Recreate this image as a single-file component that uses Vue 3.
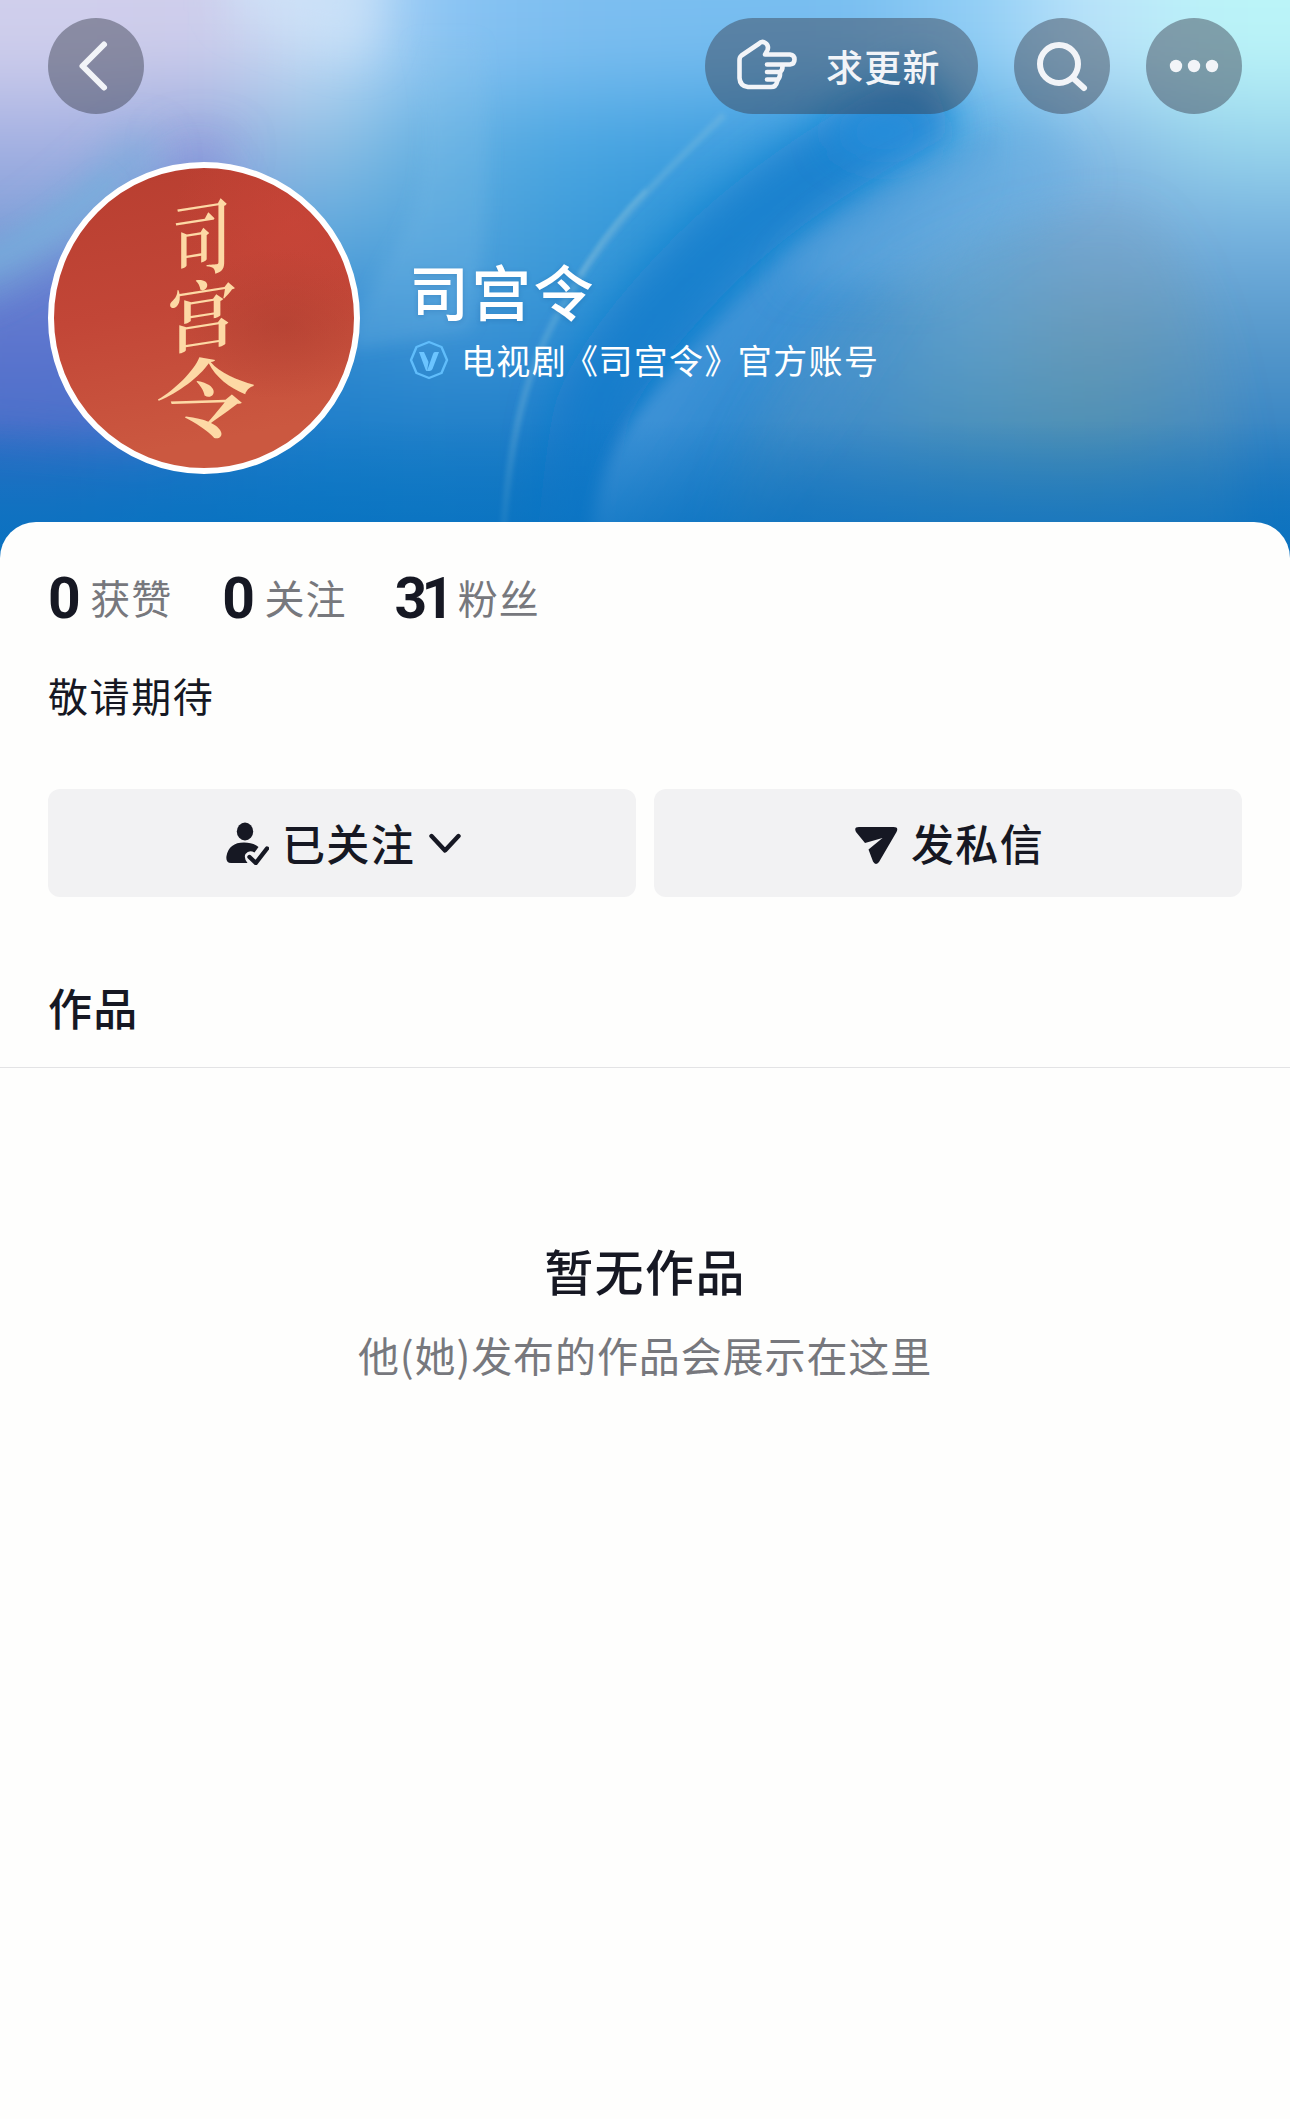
<template>
  <main class="profile-page">
    <section class="hero">
      <svg class="hero-bg" viewBox="0 0 1290 570" preserveAspectRatio="none" aria-hidden="true">
        <defs>
          <linearGradient id="wing" gradientUnits="userSpaceOnUse" x1="680" y1="300" x2="860" y2="420">
            <stop offset="0" stop-color="#4596da" />
            <stop offset="1" stop-color="#4b98d3" stop-opacity="0" />
          </linearGradient>
          <linearGradient id="floor" x1="0" y1="0" x2="0" y2="1">
            <stop offset="0" stop-color="#0872c1" stop-opacity="0" />
            <stop offset="1" stop-color="#0872c1" stop-opacity=".85" />
          </linearGradient>
          <filter id="b2" filterUnits="userSpaceOnUse" x="-200" y="-200" width="1700" height="1000"><feGaussianBlur stdDeviation="2" /></filter>
          <filter id="b8" filterUnits="userSpaceOnUse" x="-200" y="-200" width="1700" height="1000"><feGaussianBlur stdDeviation="8" /></filter>
          <filter id="b20" filterUnits="userSpaceOnUse" x="-200" y="-200" width="1700" height="1000"><feGaussianBlur stdDeviation="20" /></filter>
          <filter id="mesh" filterUnits="userSpaceOnUse" x="-200" y="-200" width="1700" height="1000" color-interpolation-filters="sRGB"><feGaussianBlur stdDeviation="50 44" /></filter>
        </defs>
        <g filter="url(#mesh)">
          <rect v-for="cell in cells" :key="cell.key" :x="cell.x" :y="cell.y" :width="cell.w" :height="cell.h" :fill="cell.fill" />
        </g>
        <path d="M230-60H376Q390 20 362 60Q300 40 230 10Z" fill="#d2e6fa" fill-opacity=".55" filter="url(#b20)" />
        <path d="M-40 310Q80 265 200 150L230 190L160 450L-40 430Z" fill="#5f74d0" fill-opacity=".5" filter="url(#b20)" />
        <ellipse cx="200" cy="150" rx="36" ry="16" fill="#9296dc" fill-opacity=".6" filter="url(#b20)" />
        <path d="M-40 285Q60 235 150 145" fill="none" stroke="#74acdb" stroke-opacity=".75" stroke-width="36" filter="url(#b20)" />
        <path d="M-40 272Q40 240 110 180" fill="none" stroke="#78b0dc" stroke-opacity=".4" stroke-width="26" filter="url(#b8)" />
        <path d="M412 40Q444 160 398 240T350 350L470 330Q500 180 480 40Z" fill="#8cc4ea" fill-opacity=".2" filter="url(#b8)" />
        <path d="M940 98Q780 180 690 275T590 420T570 600" fill="none" stroke="#0a7aca" stroke-opacity=".7" stroke-width="76" filter="url(#b20)" />
        <ellipse cx="885" cy="132" rx="52" ry="26" fill="#278fdd" fill-opacity=".8" filter="url(#b20)" />
        <path d="M1000 130Q870 190 790 252Q700 335 640 410T592 600H900L1000 260Z" fill="url(#wing)" filter="url(#b8)" />
        <path d="M1040 125Q920 170 830 232L780 280L930 290L1080 180Z" fill="#70b0e2" fill-opacity=".5" filter="url(#b20)" />
        <path d="M715 570Q730 400 850 305Q1000 200 1140 210Q1240 300 1245 570Z" fill="#6c98ae" fill-opacity=".2" filter="url(#b20)" />
        <path d="M724 115C640 195 600 240 560 310S506 460 502 560" fill="none" stroke="#92c4dd" stroke-opacity=".26" stroke-width="7" filter="url(#b2)" />
        <path d="M646 190Q610 225 580 275" fill="none" stroke="#a8d0dd" stroke-opacity=".35" stroke-width="3" filter="url(#b2)" />
        <rect y="420" width="1290" height="150" fill="url(#floor)" />
      </svg>

      <nav class="top-bar">
        <button class="round-button" type="button" aria-label="返回">
          <svg viewBox="0 0 96 96"><path d="M56 26.500L34.500 48L56 69.500" /></svg>
        </button>
        <div class="top-actions">
          <button class="update-button" type="button">
            <svg viewBox="12 9 60 54"><path d="M42 34.500H65Q69.500 34 69.500 29.500T65 24.500H40L42.500 20Q44 15.500 40.500 13T33.500 14L16.500 25.500Q14.500 27 14.500 30V48Q15 56 23 57H46Q51 57 52 52L53 49.500H42M53 49.500Q55.500 47 55 42H42M55 42Q58 40 57.500 34.500" /></svg>
            <span>求更新</span>
          </button>
          <button class="round-button" type="button" aria-label="搜索">
            <svg viewBox="0 0 96 96"><circle cx="45" cy="46" r="19" /><path d="M59 60L70 70" /></svg>
          </button>
          <button class="round-button" type="button" aria-label="更多">
            <svg class="dots" viewBox="0 0 96 96"><circle cx="30" cy="48" r="6.200" /><circle cx="48" cy="48" r="6.200" /><circle cx="66" cy="48" r="6.200" /></svg>
          </button>
        </div>
      </nav>

      <div class="identity">
        <div class="avatar">
          <div class="calligraphy"><span v-for="char in name" :key="char">{{ char }}</span></div>
        </div>
        <div class="identity-copy">
          <h1>{{ name }}</h1>
          <p>
            <svg viewBox="0 0 40 40"><path class="badge-ring" d="M20 2L32.500 7L38 20L32.500 33L20 38L7.500 33L2 20L7.500 7Z" /><path class="badge-v" d="M10 12H15L19.500 22L18 31Q17 31 16.500 29.500ZM26 12H30L23.500 29Q22.500 31 20.500 31H18L24 14Q24.500 12 26 12Z" /></svg>
            <span class="verify">电视剧<i class="open">《</i>司宫令<i class="close">》</i>官方账号</span>
          </p>
        </div>
      </div>
    </section>

    <section class="sheet">
      <div class="stats">
        <div v-for="item in stats" :key="item.label" class="stat">
          <strong>{{ item.value }}</strong><span>{{ item.label }}</span>
        </div>
      </div>
      <p class="bio">敬请期待</p>
      <div class="actions">
        <button type="button">
          <svg class="action-icon" viewBox="0 0 43 44"><ellipse cx="19" cy="10.500" rx="8.200" ry="9" /><path d="M5 42Q-.500 42 .500 35Q3 21.500 18 21.500Q27 21.500 32.500 26L28.500 31.500Q23 28.500 19.500 33Q17.500 37 21.500 42Z" /><path class="check" d="M23.500 36L29.800 42L41 27.500" /></svg>
          <span>已关注</span>
          <svg class="chevron" viewBox="0 0 32 22"><path d="M2.500 4L16 18.500L29.500 4" /></svg>
        </button>
        <button type="button">
          <svg class="action-icon" viewBox="0 0 43 44"><path d="M4 6H38.500Q44 6 41.500 11L24 41Q20.500 45 18 40.500L13.500 28.500L27.500 17L10 22L1 11Q-1.500 6 4 6Z" /></svg>
          <span>发私信</span>
        </button>
      </div>
      <div class="tabs"><h2>作品</h2></div>
      <div class="empty">
        <h3>暂无作品</h3>
        <p>他(她)发布的作品会展示在这里</p>
      </div>
    </section>
  </main>
</template>

<script setup>
const name = '司宫令'

const stats = [
  { value: '0', label: '获赞' },
  { value: '0', label: '关注' },
  { value: '31', label: '粉丝' },
]

// 背景色网格，模糊后形成渐变
const palette = [
  ['#d0cfec', '#cfcdeb', '#c6def6', '#88c3f3', '#7dbef0', '#79bef0', '#79bef0', '#90cdf5', '#bce4fa', '#bbf4f8'],
  ['#a4b0e2', '#96a9dd', '#90c0e4', '#5faee0', '#48a5e2', '#3f9fdf', '#2f95dc', '#50a8e0', '#85bce5', '#99d5ec'],
  ['#7f9fd8', '#7c9bd8', '#5ea8dc', '#51a3dc', '#3b9bd9', '#2a92d7', '#2a8cd3', '#62a9de', '#78a9d8', '#74b0de'],
  ['#5c76cc', '#4a7fcf', '#318bd0', '#3d93d5', '#2f8fd4', '#1f85d0', '#3d90d3', '#5ba0d0', '#6799b8', '#5899cb'],
  ['#376cc5', '#2a76c8', '#1f7fcb', '#2381c9', '#1f7dca', '#1079c8', '#388bcf', '#4490be', '#4b90b4', '#3b87c4'],
  ['#1272c0', '#0a75c2', '#0b77c3', '#0f78c3', '#0f74c1', '#0871c1', '#1974bf', '#2278bb', '#257ab9', '#1573bc'],
]

// 边缘格子向外延伸，避免模糊后露出透明边
const cells = palette.flatMap((row, r) => row.map((fill, c) => {
  const left = c === 0 ? 180 : 0
  const right = c === row.length - 1 ? 180 : 1
  const top = r === 0 ? 180 : 0
  const bottom = r === palette.length - 1 ? 180 : 1
  return { key: `${r}-${c}`, x: c * 129 - left, y: r * 95 - top, w: 129 + left + right, h: 95 + top + bottom, fill }
}))
</script>

<style>
body{margin:0;background:#fefefd}
</style>

<style scoped>
.profile-page{min-height:2119px;background:#fefefd;color:#161823;font-family:"Noto Sans CJK SC",sans-serif;overflow:hidden}
h1,h2,h3,p{margin:0}
button{border:0;padding:0;font:inherit;color:inherit;cursor:pointer}
.hero{position:relative;height:570px;box-sizing:border-box;padding:18px 48px 0}
.hero-bg{position:absolute;inset:0;width:100%;height:100%}
.top-bar{position:relative;display:flex;justify-content:space-between}
.top-actions{display:flex;gap:36px}
.round-button{width:96px;height:96px;border-radius:50%;background:rgba(55,60,75,.45)}
.round-button svg{display:block;width:96px;height:96px;fill:none;stroke:#f2f4f8;stroke-width:6;stroke-linecap:round;stroke-linejoin:round}
.round-button .dots{fill:#f2f4f8;stroke:none}
.update-button{display:flex;align-items:center;width:273px;height:96px;box-sizing:border-box;padding-left:32px;gap:29px;border-radius:48px;background:rgba(55,60,75,.45);color:#f2f4f8}
.update-button svg{width:60px;height:54px;fill:none;stroke:#f2f4f8;stroke-width:4.6;stroke-linecap:round;stroke-linejoin:round}
.update-button span{font-size:37px;line-height:54px;letter-spacing:1.2px;white-space:nowrap;font-weight:500}
.identity{position:relative;display:flex;margin-top:48px}
.avatar{width:312px;height:312px;box-sizing:border-box;border:6px solid #fff;border-radius:50%;background:radial-gradient(ellipse at 76% 52%,rgba(171,61,47,.5),transparent 34%),radial-gradient(circle at 80% 18%,rgba(203,69,57,.6),transparent 35%),linear-gradient(170deg,#b93f31 5%,#c24637 45%,#cb5840 85%);overflow:hidden}
.calligraphy{display:flex;flex-direction:column;align-items:center;padding-top:27px;color:#fdd9a5;font-family:"Noto Serif CJK SC","Noto Sans CJK SC",serif;font-weight:600}
.calligraphy span{height:79px;font-size:70px;line-height:78px;transform:translateX(-2px) skewY(-9deg) scale(.84,1.16)}
.calligraphy span:nth-child(2){transform:translate(-2px,-2px) skewY(-9deg) scale(1,1.08)}
.calligraphy span:last-child{margin-left:4px;transform:translateY(2px) skewY(-2deg) scale(1.42,1.24)}
.identity-copy{padding:84px 0 0 49px;color:#fff}
.identity-copy h1{font-size:60px;line-height:88px;font-weight:500;letter-spacing:2.3px;text-shadow:0 1px 5px rgba(0,60,120,.2)}
.identity-copy p{display:flex;align-items:center;gap:12px;height:50px;margin-top:1px}
.identity-copy p svg{width:40px;height:40px}
.badge-ring{fill:none;stroke:#60bdfb;stroke-width:2.4;stroke-linejoin:round}
.badge-v{fill:#6bc4ff}
.verify{font-size:34px;line-height:50px;letter-spacing:1.35px}
.verify i{font-style:normal}
.verify .open{margin:0 -1px 0 -3px}
.verify .close{margin-right:-2px}
.sheet{position:relative;margin-top:-48px;padding-top:41px;border-radius:36px 36px 0 0;background:#fefefd}
.stats{display:flex;gap:50px;height:72px;padding-left:48px}
.stat{display:flex;align-items:center}
.stat strong{font-family:Roboto,"Noto Sans CJK SC",sans-serif;font-size:57px;line-height:74px;font-weight:700;letter-spacing:-3.5px}
.stat span{margin:-4px 0 0 13px;font-size:40px;line-height:60px;letter-spacing:1px;color:#77787d}
.stat:last-child{margin-left:-2px}
.stat:last-child strong{letter-spacing:-5.5px}
.stat:last-child span{margin-left:9px}
.bio{margin:30px 48px 0;font-size:40px;line-height:60px;letter-spacing:1.6px}
.actions{display:flex;gap:18px;margin:64px 48px 0}
.actions button{flex:1;display:flex;align-items:center;justify-content:center;height:108px;border-radius:12px;background:#f2f2f3}
.actions span{margin-top:-3px;font-size:43px;line-height:64px;letter-spacing:1.4px;font-weight:500}
.action-icon{width:43px;height:44px;margin:0 13px 0 3px;fill:#161823}
.check,.chevron{fill:none;stroke:#161823;stroke-width:4.4;stroke-linecap:round;stroke-linejoin:round}
.chevron{width:32px;height:22px;margin-left:14px}
.tabs{height:170px;box-sizing:border-box;margin-top:1px;padding:77px 48px 0;border-bottom:1px solid #e3e3e5}
.tabs h2{font-size:44px;line-height:64px;letter-spacing:1.2px;font-weight:500}
.empty{padding-top:166px;text-align:center}
.empty h3{font-size:49px;line-height:72px;letter-spacing:1.4px;font-weight:500}
.empty p{margin-top:18px;font-size:41px;line-height:60px;letter-spacing:.9px;color:#77787d}
</style>
